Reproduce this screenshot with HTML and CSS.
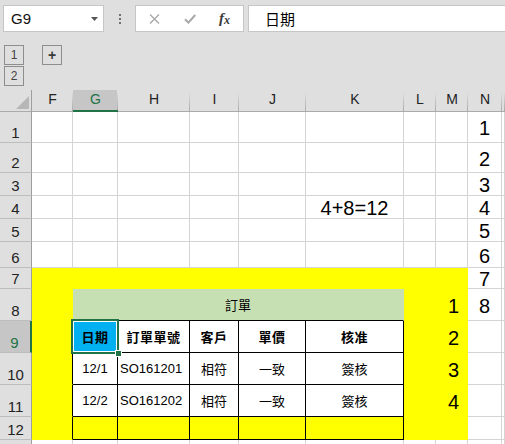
FILE: index.html
```html
<!DOCTYPE html>
<html lang="zh-Hant">
<head>
<meta charset="utf-8">
<title>Excel</title>
<link rel="stylesheet" href="styles.css">
</head>
<body>
<div class="app">
  <div class="toolbar">
    <div class="namebox"><span class="ref">G9</span><svg class="caret" width="7" height="4" viewBox="0 0 7 4"><polygon points="0,0 7,0 3.5,4" fill="#555"/></svg></div>
    <div class="dots"><span></span><span></span><span></span></div>
    <div class="fxbtns">
      <span class="fxslot"><svg width="11" height="10" viewBox="0 0 11 10"><path d="M1 0.5 L10 9.5 M10 0.5 L1 9.5" stroke="#a8a8a8" stroke-width="1.4" fill="none"/></svg></span>
      <span class="fxslot"><svg width="12" height="10" viewBox="0 0 12 10"><path d="M1 5.2 L4.4 8.6 L11.2 1" stroke="#a8a8a8" stroke-width="2" fill="none"/></svg></span>
      <span class="fxslot fxtext"><i>f</i><i class="fxx">x</i></span>
    </div>
    <div class="formula">日期</div>
  </div>
  <div class="outline">
    <div class="levels">
      <div class="obtn">1</div>
      <div class="obtn">2</div>
    </div>
    <div class="obtn plus">+</div>
  </div>
  <div class="sheet">
    <div class="ch corner"><svg width="13" height="13" viewBox="0 0 13 13"><polygon points="13,0 13,13 0,13" fill="#b7b7b7"/></svg></div>
    <div class="ch">F</div><div class="ch sel">G</div><div class="ch">H</div><div class="ch">I</div><div class="ch">J</div><div class="ch">K</div><div class="ch">L</div><div class="ch">M</div><div class="ch">N</div><div class="ch"></div>

    <div class="rh">1</div>
    <div class="c"></div><div class="c"></div><div class="c"></div><div class="c"></div><div class="c"></div><div class="c"></div><div class="c"></div><div class="c"></div><div class="c big">1</div><div class="c"></div>

    <div class="rh">2</div>
    <div class="c"></div><div class="c"></div><div class="c"></div><div class="c"></div><div class="c"></div><div class="c"></div><div class="c"></div><div class="c"></div><div class="c big">2</div><div class="c"></div>

    <div class="rh">3</div>
    <div class="c"></div><div class="c"></div><div class="c"></div><div class="c"></div><div class="c"></div><div class="c"></div><div class="c"></div><div class="c"></div><div class="c big">3</div><div class="c"></div>

    <div class="rh">4</div>
    <div class="c"></div><div class="c"></div><div class="c"></div><div class="c"></div><div class="c"></div><div class="c big">4+8=12</div><div class="c"></div><div class="c"></div><div class="c big">4</div><div class="c"></div>

    <div class="rh">5</div>
    <div class="c"></div><div class="c"></div><div class="c"></div><div class="c"></div><div class="c"></div><div class="c"></div><div class="c"></div><div class="c"></div><div class="c big">5</div><div class="c"></div>

    <div class="rh">6</div>
    <div class="c"></div><div class="c"></div><div class="c"></div><div class="c"></div><div class="c"></div><div class="c"></div><div class="c"></div><div class="c"></div><div class="c big">6</div><div class="c"></div>

    <div class="rh">7</div>
    <div class="c y span8"></div><div class="c big">7</div><div class="c"></div>

    <div class="rh">8</div>
    <div class="c y"></div><div class="c gh">訂單</div><div class="c y"></div><div class="c y big num">1</div><div class="c big">8</div><div class="c"></div>

    <div class="rh sel">9</div>
    <div class="c y edge"></div>
    <div class="c t th cur">日期<span class="selbox"></span></div>
    <div class="c t th">訂單單號</div>
    <div class="c t th">客戶</div>
    <div class="c t th">單價</div>
    <div class="c t th">核准</div>
    <div class="c y"></div><div class="c y big num">2</div><div class="c"></div><div class="c"></div>

    <div class="rh">10</div>
    <div class="c y edge"></div>
    <div class="c t td">12/1</div>
    <div class="c t td left">SO161201</div>
    <div class="c t td">相符</div>
    <div class="c t td">一致</div>
    <div class="c t td">簽核</div>
    <div class="c y"></div><div class="c y big num">3</div><div class="c"></div><div class="c"></div>

    <div class="rh">11</div>
    <div class="c y edge"></div>
    <div class="c t td">12/2</div>
    <div class="c t td left">SO161202</div>
    <div class="c t td">相符</div>
    <div class="c t td">一致</div>
    <div class="c t td">簽核</div>
    <div class="c y"></div><div class="c y big num">4</div><div class="c"></div><div class="c"></div>

    <div class="rh">12</div>
    <div class="c y edge"></div>
    <div class="c t ty"></div><div class="c t ty"></div><div class="c t ty"></div><div class="c t ty"></div><div class="c t ty"></div>
    <div class="c y"></div><div class="c y"></div><div class="c"></div><div class="c"></div>

    <div class="rh"></div>
    <div class="c"></div><div class="c"></div><div class="c"></div><div class="c"></div><div class="c"></div><div class="c"></div><div class="c"></div><div class="c"></div><div class="c"></div><div class="c"></div>
  </div>
</div>
</body>
</html>
```

FILE: styles.css
```css
html, body {
  margin: 0;
  padding: 0;
}
body {
  font-family: "Liberation Sans", "Noto Sans CJK TC", sans-serif;
  background: #dfdfdf;
}
.app {
  width: 505px;
  height: 444px;
  overflow: hidden;
  background: #dfdfdf;
}

/* toolbar */
.toolbar {
  display: flex;
  height: 27px;
  padding-top: 5px;
}
.namebox {
  margin-left: 3px;
  width: 101px;
  box-sizing: border-box;
  border: 1px solid #c6c6c6;
  background: #fff;
  display: flex;
  align-items: center;
  justify-content: space-between;
  padding: 0 5px 0 7px;
  font-size: 15px;
  color: #111;
}
.namebox .caret {
  margin-top: 1px;
}
.dots {
  width: 31px;
  display: flex;
  flex-direction: column;
  align-items: center;
  justify-content: center;
  gap: 2px;
}
.dots span {
  width: 2px;
  height: 2px;
  background: #707070;
}
.fxbtns {
  width: 109px;
  box-sizing: border-box;
  border: 1px solid #c6c6c6;
  background: #fff;
  display: flex;
  align-items: center;
  padding-left: 1px;
}
.fxslot {
  width: 35px;
  display: flex;
  justify-content: center;
  align-items: center;
}
.fxtext {
  font-family: "Liberation Serif", serif;
  font-size: 15px;
  color: #3a3a3a;
  font-weight: bold;
}
.fxtext i {
  font-style: italic;
}
.fxtext .fxx {
  font-size: 12px;
  position: relative;
  top: 2px;
}
.formula {
  margin-left: 4px;
  margin-right: -6px;
  flex: 1;
  box-sizing: border-box;
  border: 1px solid #c6c6c6;
  background: #fff;
  padding-left: 16px;
  display: flex;
  align-items: center;
  font-family: "Noto Sans CJK TC", sans-serif;
  font-size: 15px;
  color: #000;
}

/* outline */
.outline {
  height: 58px;
  box-sizing: border-box;
  padding: 13px 0 0 4px;
  display: flex;
  align-items: flex-start;
}
.levels {
  display: flex;
  flex-direction: column;
  gap: 1px;
}
.obtn {
  width: 20px;
  height: 20px;
  box-sizing: border-box;
  border: 1px solid #8e8e8e;
  display: flex;
  align-items: center;
  justify-content: center;
  font-size: 12px;
  color: #444;
}
.obtn.plus {
  margin-left: 18px;
  font-size: 14px;
  font-weight: bold;
  color: #3a3a3a;
  line-height: 1;
}

/* sheet grid */
.sheet {
  display: grid;
  grid-template-columns: 32px 41px 45px 72px 49px 67px 98px 32px 32px 34px 1fr;
  grid-template-rows: 22px 31px 30px 23px 23px 23px 26px 21px 32px 32px 32px 32px 23px 20px;
  height: 354px;
  overflow: hidden;
  background: #fff;
}
.sheet > div {
  box-sizing: border-box;
  min-width: 0;
  overflow: visible;
}
.ch {
  background: linear-gradient(to bottom, #e4e4e4, #a9a9a9) no-repeat right top / 1px 100%, #dfdfdf;
  border-bottom: 1px solid #ababab;
  display: flex;
  align-items: center;
  justify-content: center;
  font-size: 14px;
  color: #222;
  padding-bottom: 3px;
}
.ch.corner {
  background: #dfdfdf;
  border-right: 1px solid #9e9e9e;
  align-items: flex-end;
  justify-content: flex-end;
  padding: 0 2px 2px 0;
}
.ch.sel {
  background: linear-gradient(to bottom, #e4e4e4, #a9a9a9) no-repeat right top / 1px 100%, #c6c6c6;
  border-bottom: 2px solid #217346;
  color: #217346;
  padding-bottom: 2px;
}
.rh {
  background: #dfdfdf;
  border-right: 1px solid #9e9e9e;
  border-bottom: 1px solid #bdbdbd;
  display: flex;
  align-items: flex-end;
  justify-content: center;
  font-size: 15px;
  line-height: 16px;
  color: #222;
  padding-bottom: 1px;
  overflow: hidden;
}
.rh.sel {
  background: #c6c6c6;
  border-right: 2px solid #217346;
  color: #217346;
  padding-right: 1px;
}
.c {
  border-right: 1px solid #d4d4d4;
  border-bottom: 1px solid #d4d4d4;
  display: flex;
  align-items: center;
  justify-content: center;
  font-size: 13px;
  color: #000;
  white-space: nowrap;
}
.c.big {
  font-size: 20px;
  padding-top: 3px;
}
.c.y {
  background: #ffff00;
  border-color: #ffff00;
}
.c.span8 {
  grid-column: span 8;
}
.c.num {
  justify-content: flex-end;
  padding-right: 8px;
}
.c.edge {
  border-right-color: #000;
}
.c.gh {
  grid-column: span 5;
  background: #c6e0b4;
  border-right-color: #c6e0b4;
  border-bottom-color: #000;
  font-family: "Noto Sans CJK TC", sans-serif;
  font-size: 13px;
  padding-bottom: 1px;
}
.c.t {
  border-right-color: #000;
  border-bottom-color: #000;
}
.c.ty {
  background: #ffff00;
}
.c.th {
  font-family: "Noto Sans CJK TC", sans-serif;
  font-weight: bold;
  font-size: 13px;
  letter-spacing: 0.5px;
}
.c.td {
  font-family: "Liberation Sans", "Noto Sans CJK TC", sans-serif;
  font-size: 13px;
}
.c.left {
  justify-content: flex-start;
  padding-left: 2px;
}
.c.cur {
  background: #00b0f0;
  position: relative;
}
.selbox {
  position: absolute;
  inset: -2px;
  border: 2px solid #217346;
  box-shadow: inset 0 0 0 1px #fff;
  z-index: 2;
}
.selbox::after {
  content: "";
  position: absolute;
  right: -5px;
  bottom: -5px;
  width: 7px;
  height: 7px;
  box-sizing: border-box;
  background: #217346;
  border: 1px solid #fff;
}
```
